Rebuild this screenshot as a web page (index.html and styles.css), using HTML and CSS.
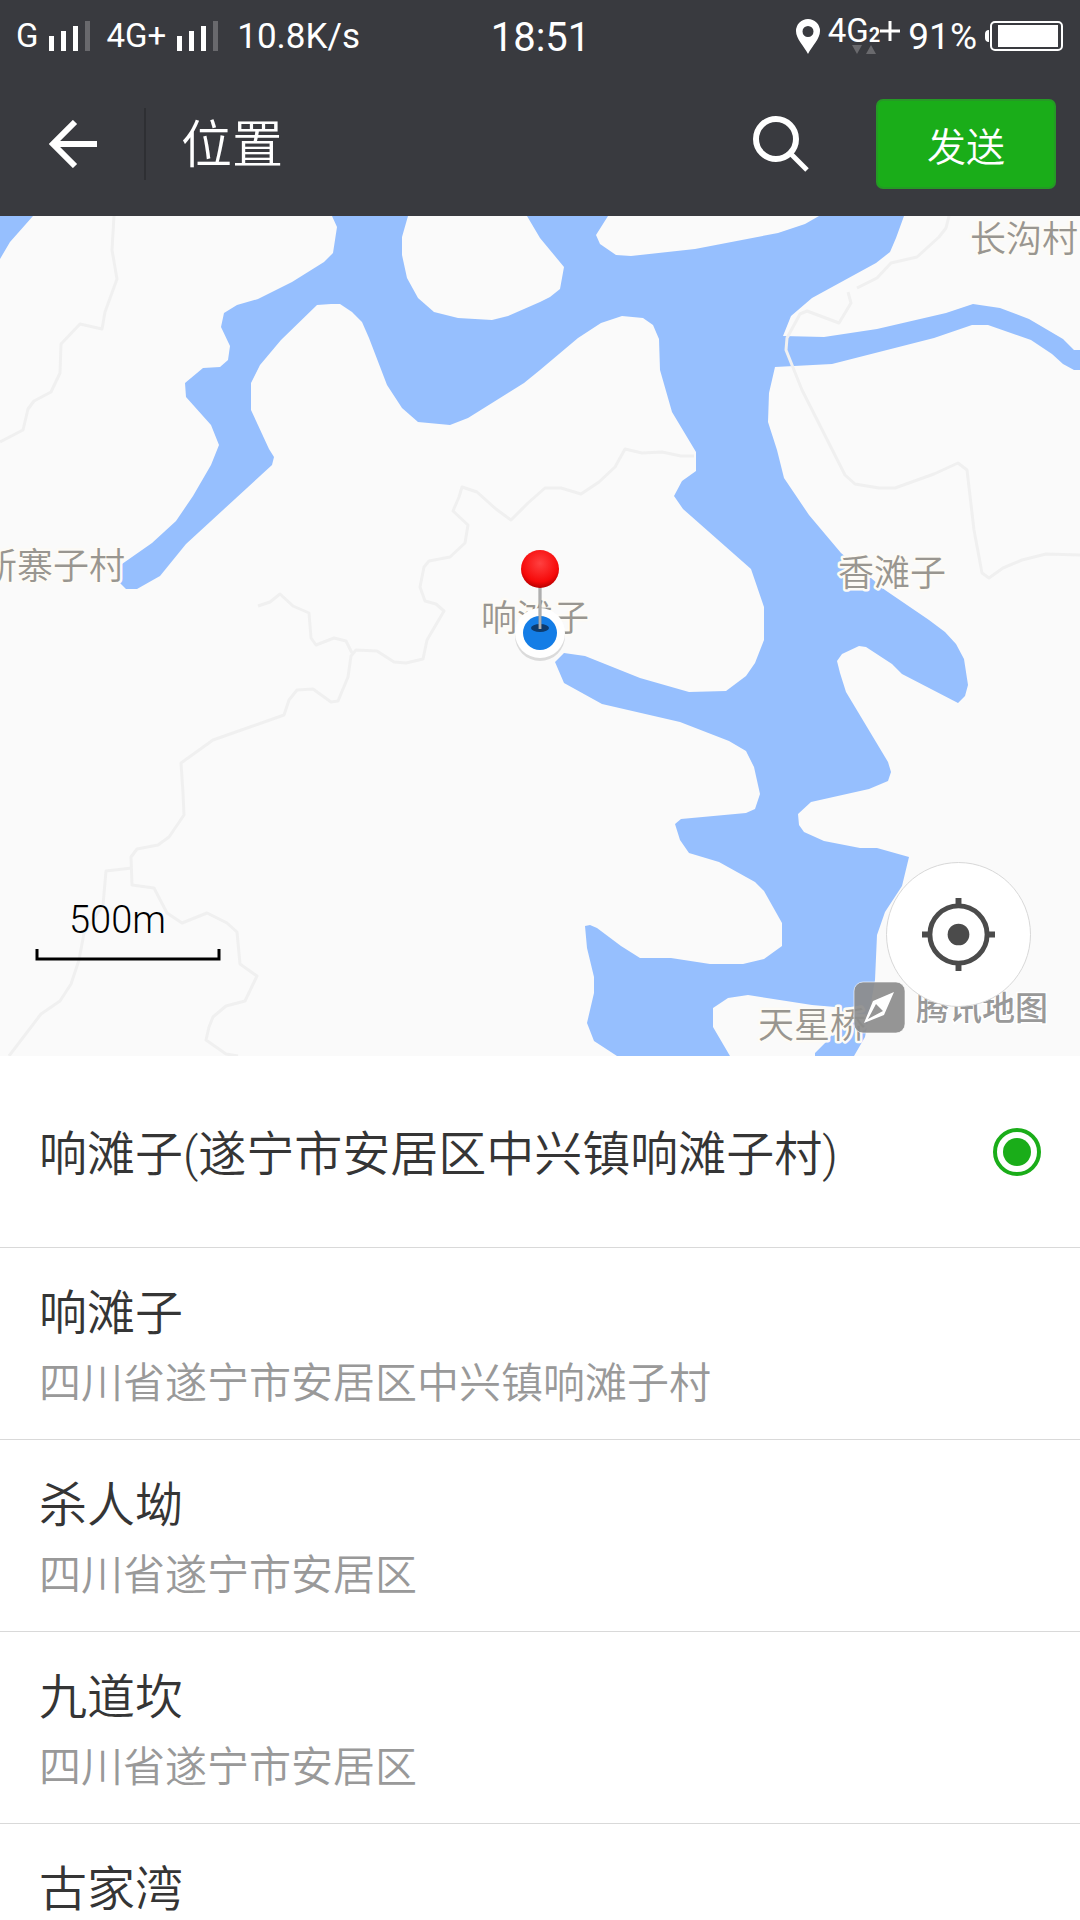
FILE: index.html
```html
<!DOCTYPE html>
<html lang="zh-CN">
<head>
<meta charset="utf-8">
<meta name="viewport" content="width=device-width, initial-scale=1">
<title>位置</title>
<link rel="stylesheet" href="styles.css">
</head>
<body>
<div class="app">
  <div class="status">
    <div class="status-left">
      <div class="network">
        <span class="carrier">G</span>
        <svg class="bars" viewBox="0 0 41 30" width="41" height="30" aria-hidden="true"><path fill="#fff" d="M0 15h5v15H0zM12 10h5v20h-5zM24 5h5v25h-5z"/><path fill="#69696d" d="M36 0h5v30h-5z"/></svg>
      </div>
      <div class="network">
        <span class="carrier">4G+</span>
        <svg class="bars" viewBox="0 0 41 30" width="41" height="30" aria-hidden="true"><path fill="#fff" d="M0 15h5v15H0zM12 10h5v20h-5zM24 5h5v25h-5z"/><path fill="#69696d" d="M36 0h5v30h-5z"/></svg>
      </div>
      <span class="rate">10.8K/s</span>
    </div>
    <time class="clock">18:51</time>
    <div class="status-right">
      <svg viewBox="0 0 24 35" width="24" height="35" aria-hidden="true"><path fill="#fff" fill-rule="evenodd" d="M12 0a12 12 0 0 1 12 12c0 8-8 15-12 23C8 27 0 20 0 12A12 12 0 0 1 12 0zm0 7a5 5 0 1 0 0 11 5 5 0 0 0 0-11z"/></svg>
      <div class="data">
        <div class="data-type"><span>4G</span><b class="sim">2</b><svg viewBox="0 0 20 20" width="20" height="20" aria-hidden="true"><path d="M10 0v20M0 10h20" stroke="#fff" stroke-width="3"/></svg></div>
        <svg class="traffic" viewBox="0 0 24 9" width="24" height="9" aria-hidden="true"><path fill="#69696d" d="M0 0h10L5 9zM14 9h10L19 0z"/></svg>
      </div>
      <span class="charge">91%</span>
      <svg class="battery" viewBox="0 0 78 30" width="78" height="30" aria-hidden="true"><path fill="#fff" d="M4 9v12c-3 0-4-2-4-4v-4c0-2 1-4 4-4zM13 4h60v22H13z"/><rect x="6" y="1" width="71" height="28" rx="4" fill="none" stroke="#fff" stroke-width="2"/></svg>
    </div>
  </div>

  <header class="appbar">
    <button class="back" type="button" aria-label="返回"><svg viewBox="0 0 48 48" width="48" height="48"><path d="M26 2 4 24l22 22M3 24h45" fill="none" stroke="#fff" stroke-width="6"/></svg></button>
    <h1 class="title">位置</h1>
    <button class="search" type="button" aria-label="搜索"><svg viewBox="0 0 57 57" width="57" height="57"><circle cx="23" cy="23" r="20" fill="none" stroke="#fff" stroke-width="6"/><path d="m37 37 17 17" stroke="#fff" stroke-width="5"/></svg></button>
    <button class="send" type="button">发送</button>
  </header>

  <section class="map" aria-label="地图">
    <svg class="map-canvas" viewBox="0 0 1080 840">
      <defs>
        <radialGradient id="ball" cx="50%" cy="35%" r="65%">
          <stop offset="0" stop-color="#ff4040"/><stop offset=".75" stop-color="#f60a0a"/><stop offset="1" stop-color="#b80000"/>
        </radialGradient>
      </defs>
      <path class="water" d="M0 0H33L10 26 0 43z"/>
      <path class="water" d="M332 0 337 11 333 37 324 46 292 66 258 83 237 89 224 97 221 111 230 130 228 144 220 151 203 152 185 167 186 181 211 209 219 229 211 249 193 280 176 305 152 327 122 348 119 366 126 373 137 373 160 360 186 328 272 249 274 241 269 233 251 194 251 167 260 149 281 124 317 89 331 88 340 88 352 96 362 106 369 122 387 169 402 192 418 206 450 209 468 202 524 167 540 154 578 122 601 107 622 100 643 102 653 109 659 123 660 154 672 196 696 236 696 255 682 265 674 280 683 293 751 353 764 391 764 424 755 447 746 460 726 475 689 476 640 462 585 440 564 437 555 446 564 467 602 488 680 506 729 525 746 535 754 551 760 578 755 593 746 597 681 603 675 608 680 624 689 637 719 646 755 666 764 675 782 707 782 730 764 743 743 748 710 748 671 742 640 742 621 730 597 712 590 709 585 710 587 732 594 761 594 777 587 807 594 825 617 840H730L713 811 713 792 728 782 748 779 812 789 835 791 848 800 826 826 815 837V840H854L865 821 875 764 877 719 885 696 902 670 909 641 877 632 860 632 824 625 804 616 799 609 798 598 811 586 869 573 888 565 891 556 888 546 846 476 840 457 837 445 842 438 859 430 866 431 892 448 902 458 958 487 965 480 968 469 964 443 956 428 945 416 929 404 885 374 871 362 841 337 809 299 784 262 777 234 768 206 769 177 775 151 832 148 934 122 972 109 988 109 1031 124 1052 138 1063 148 1074 154H1080V134H1074L1063 123 1029 103 1000 92 973 88 946 97 877 113 824 121 783 120 791 100 812 82 876 47 890 36 896 22 904 0H819L805 8 778 17 695 33 631 40 616 39 600 28 596 19 608 0H527L540 22 564 51 560 73 550 81 540 86 508 100 492 104 458 102 434 96 418 82 407 62 402 39 402 21 408 0z"/>
      <path class="road" d="M114 0 112 34 117 63 105 96 102 113 80 108 61 128 60 157 51 176 34 185 28 193 23 214 0 226"/>
      <path class="road" d="M694 240H681L662 236 642 237 625 233 615 251 599 266 581 278 561 272H545L528 287 511 304 496 293 477 276 462 271 459 281 453 295 468 309 465 327 450 341 429 345 424 351 420 371 425 385 436 388 444 395 427 424 423 443 406 447 394 446 377 435 356 434 351 440 348 461 338 485 331 486 313 473 297 474 289 484 284 499 213 524 181 547 183 577 184 599 169 621 158 629 137 633 131 641 132 669 154 672 167 697 182 707 207 697 227 707 237 716 240 748 257 760 245 785 226 790 213 801 209 811 206 824 226 838 238 840"/>
      <path class="road" d="M132 652 106 655 103 689 84 717 79 744 71 768 60 785 41 798 9 840M258 390 270 386 280 378 293 390 309 397 311 422 316 429 334 422 346 425 352 437"/>
      <path class="road" d="M949 0 946 12 939 21 917 41 891 47 877 62 857 72M848 76 851 87 839 107 807 95 800 98 787 122 786 134 802 174 845 259 855 268 879 272 895 272 934 258 958 247 967 254 974 314 982 357 989 362 1003 352 1022 344 1046 338 1080 339"/>
      <g class="place">
        <text x="970" y="36">长沟村</text>
        <text x="-19" y="363">新寨子村</text>
        <text x="481" y="415">响滩子</text>
        <text x="838" y="370">香滩子</text>
        <text x="758" y="822">天星桥</text>
      </g>
      <g>
        <rect x="854" y="766" width="51" height="51" rx="9" fill="#8c8c8c" fill-opacity=".92" stroke="#fff" stroke-opacity=".6"/>
        <path fill="#fff" fill-rule="evenodd" d="M894 776 884 799 864 807 873 785zM876 788 883 795 868 803z"/>
        <text class="brand" x="916" y="804">腾讯地图</text>
      </g>
      <g>
        <circle cx="540" cy="420" r="25" fill="#000" fill-opacity=".12"/>
        <circle cx="540" cy="417" r="25" fill="#fff"/>
        <circle cx="540" cy="417" r="17" fill="#147de6"/>
        <ellipse cx="540" cy="412" rx="9" ry="4" fill="#0d3b6e"/>
        <path d="M540 370v43" stroke="#999" stroke-width="3"/>
        <path d="M540 370v43" stroke="#c4c4c4"/>
        <circle cx="540" cy="353" r="19" fill="url(#ball)"/>
      </g>
      <g>
        <text class="scale" x="69" y="717">500m</text>
        <path d="M37 733v10h182v-10" fill="none" stroke="#000" stroke-width="3"/>
      </g>
    </svg>
    <button class="locate" type="button" aria-label="定位"><svg viewBox="0 0 74 74" width="73" height="73"><circle cx="37" cy="37" r="29" fill="none" stroke="#4b4b4b" stroke-width="5"/><path d="M37 0v10M37 64v10M0 37h10M64 37h10" stroke="#4b4b4b" stroke-width="6"/><circle cx="37" cy="37" r="11" fill="#4b4b4b"/></svg></button>
  </section>

  <main class="places">
    <label class="row row-single">
      <span class="name">响滩子(遂宁市安居区中兴镇响滩子村)</span>
      <input class="pick" type="radio" name="place" checked>
    </label>
    <label class="row">
      <span class="info"><span class="name">响滩子</span><span class="address">四川省遂宁市安居区中兴镇响滩子村</span></span>
      <input class="pick" type="radio" name="place">
    </label>
    <label class="row">
      <span class="info"><span class="name">杀人坳</span><span class="address">四川省遂宁市安居区</span></span>
      <input class="pick" type="radio" name="place">
    </label>
    <label class="row">
      <span class="info"><span class="name">九道坎</span><span class="address">四川省遂宁市安居区</span></span>
      <input class="pick" type="radio" name="place">
    </label>
    <label class="row">
      <span class="info"><span class="name">古家湾</span></span>
      <input class="pick" type="radio" name="place">
    </label>
  </main>
</div>
</body>
</html>
```

FILE: styles.css
```css
* { box-sizing: border-box; }

body {
  margin: 0;
  background: #fff;
  font-family: Roboto, "Noto Sans CJK SC", sans-serif;
  font-weight: 350;
}

button {
  padding: 0;
  border: 0;
  background: none;
  font: inherit;
  color: inherit;
}

svg { display: block; flex: none; }

.app {
  display: flex;
  flex-direction: column;
  height: 100vh;
  overflow: hidden;
}

/* status bar */
.status {
  display: grid;
  grid-template-columns: 1fr auto 1fr;
  align-items: center;
  flex: none;
  height: 72px;
  padding: 0 17px 0 16px;
  background: #393a3f;
  color: #fff;
  font-weight: 400;
  white-space: nowrap;
}

.status-left, .status-right, .network { display: flex; align-items: center; }
.status-left { gap: 16px; }
.network { gap: 11px; }
.carrier { font-size: 33px; line-height: 40px; }
.rate { padding: 2px 0 0 3px; font-size: 35px; line-height: 40px; }
.charge { padding-top: 2px; font-size: 37px; line-height: 40px; }
.clock { padding: 4px 0 0 2px; font-size: 40px; line-height: 48px; }
.status-right { justify-content: flex-end; gap: 8px; }
.data { display: flex; flex-direction: column; align-items: center; gap: 2px; }
.data-type { display: flex; align-items: center; height: 24px; font-size: 33px; line-height: 24px; }
.sim { align-self: flex-end; font-size: 20px; line-height: 16px; }

/* app bar */
.appbar {
  display: flex;
  align-items: center;
  flex: none;
  height: 144px;
  padding-right: 24px;
  background: #393a3f;
  color: #fff;
}

.back {
  display: grid;
  place-items: center;
  width: 146px;
  height: 72px;
  padding-left: 2px;
  border-right: 2px solid #2e2f33;
}

.title {
  flex: 1;
  margin: 0;
  padding: 4px 0 0 35px;
  font-size: 51px;
  line-height: 72px;
  font-weight: 350;
}

.search { margin-right: 66px; }

.send {
  width: 180px;
  height: 90px;
  border: 2px solid #259a25;
  border-radius: 7px;
  background: #1aad19;
  font-size: 39px;
}

/* map */
.map {
  position: relative;
  flex: none;
  background: #fafafa;
}

.map-canvas { width: 100%; height: auto; }
.water { fill: #96bffe; }
.road { fill: none; stroke: #f0f0f0; stroke-width: 3; stroke-linejoin: round; }

.place {
  fill: #999690;
  stroke: #fdfbf6;
  stroke-width: 5px;
  stroke-linejoin: round;
  paint-order: stroke;
  font-size: 36px;
}

.brand {
  fill: #999;
  stroke: #fff;
  stroke-width: 3px;
  paint-order: stroke;
  font-size: 33px;
  font-weight: 500;
}

.scale { font-size: 38px; fill: #000; }

.locate {
  position: absolute;
  right: 49px;
  bottom: 49px;
  display: grid;
  place-items: center;
  width: 145px;
  height: 145px;
  border: 1px solid #d8d8d8;
  border-radius: 50%;
  background: #fff;
}

/* list of places */
.places {
  flex: 1;
  min-height: 0;
  overflow-y: auto;
  scrollbar-width: none;
}

.row {
  display: flex;
  align-items: flex-start;
  justify-content: space-between;
  height: 192px;
  padding: 30px 39px 0;
  border-bottom: 1px solid #d9d9d9;
}

.row-single { align-items: center; padding-top: 0; }
.row-single .name { padding-top: 6px; }
.info { display: flex; flex-direction: column; }
.name { font-size: 48px; line-height: 72px; color: #353535; }
.address { font-size: 42px; line-height: 68px; color: #999; }

.pick {
  appearance: none;
  display: grid;
  place-items: center;
  flex: none;
  width: 48px;
  height: 48px;
  margin: 0;
  border-radius: 50%;
}

.pick:checked { border: 4px solid #1aad19; }

.pick:checked::before {
  content: "";
  width: 28px;
  height: 28px;
  border-radius: 50%;
  background: #1aad19;
}
```
